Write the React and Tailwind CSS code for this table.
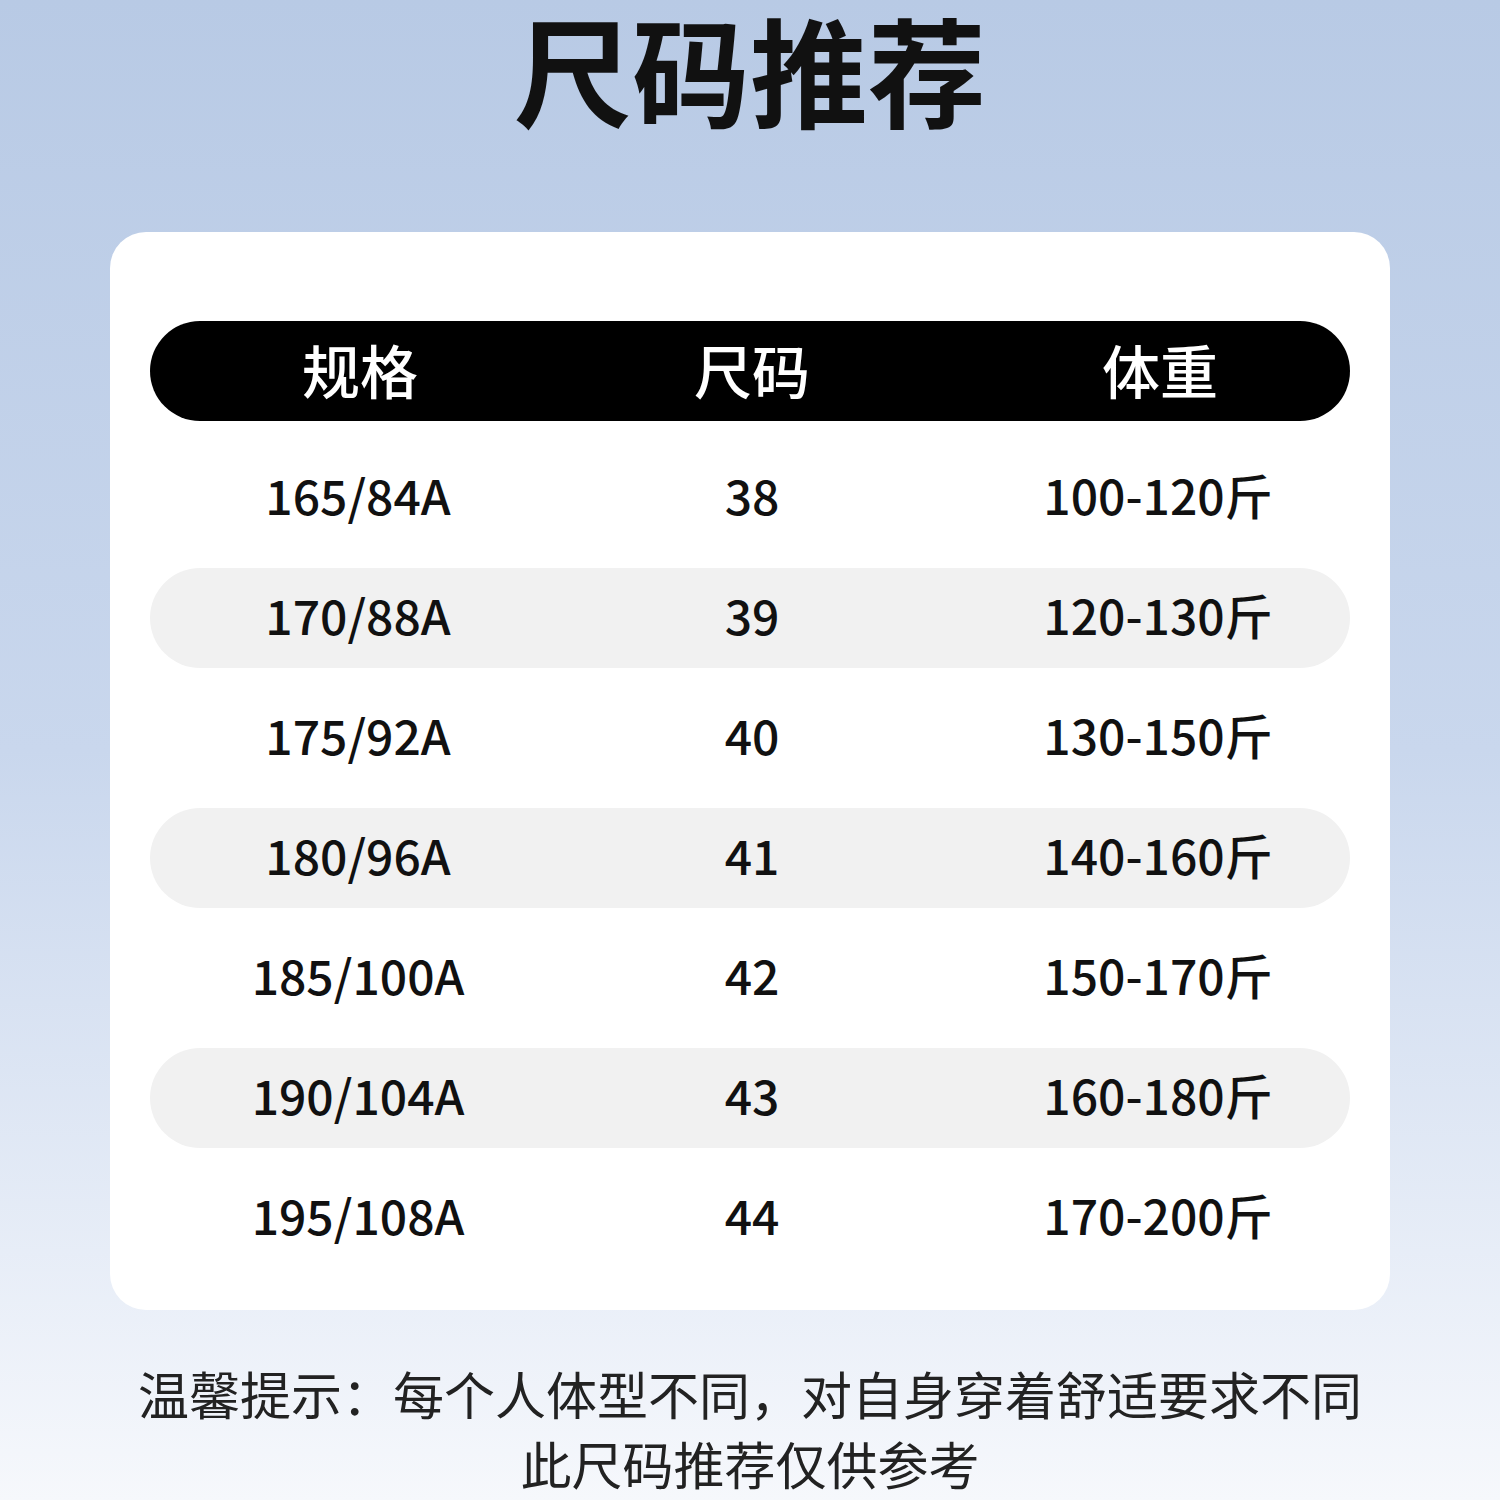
import React from "react";

const rows = [
  ["165/84A", "38", "100-120斤"],
  ["170/88A", "39", "120-130斤"],
  ["175/92A", "40", "130-150斤"],
  ["180/96A", "41", "140-160斤"],
  ["185/100A", "42", "150-170斤"],
  ["190/104A", "43", "160-180斤"],
  ["195/108A", "44", "170-200斤"],
];

export default function App() {
  return (
    <div
      className="w-[1500px] h-[1500px] overflow-hidden bg-gradient-to-b from-[#b8cae5] via-[#c9d7ed] to-[#f6f8fc] text-black"
      style={{ fontFamily: '"Noto Sans CJK SC", "Noto Sans", sans-serif' }}
    >
      <h1 className="h-[136px] text-center text-[118px] leading-[136px] font-bold text-[#111]">
        尺码推荐
      </h1>
      <div className="mt-[96px] mx-[110px] h-[1078px] rounded-[36px] bg-white px-10 pt-[89px]">
        <div className="grid grid-cols-3 h-[100px] items-center rounded-full bg-black text-white text-[58px] font-medium leading-none pb-1">
          <div className="text-center pl-5">规格</div>
          <div className="text-center pl-1">尺码</div>
          <div className="text-center pl-5">体重</div>
        </div>
        <div className="mt-[27px] flex flex-col gap-5">
          {rows.map((r, i) => (
            <div
              key={i}
              className={
                "grid grid-cols-3 h-[100px] items-center rounded-full text-[48px] font-medium leading-none text-[#111] pb-2 " +
                (i % 2 === 1 ? "bg-[#f1f1f1]" : "bg-white")
              }
            >
              <div className="text-center pl-4">{r[0]}</div>
              <div className="text-center pl-1">{r[1]}</div>
              <div className="text-center pl-4">{r[2]}</div>
            </div>
          ))}
        </div>
      </div>
      <div className="mt-[48px] text-center text-[51px] leading-[70px] text-[#222]">
        <p>温馨提示：每个人体型不同，对自身穿着舒适要求不同</p>
        <p>此尺码推荐仅供参考</p>
      </div>
    </div>
  );
}
